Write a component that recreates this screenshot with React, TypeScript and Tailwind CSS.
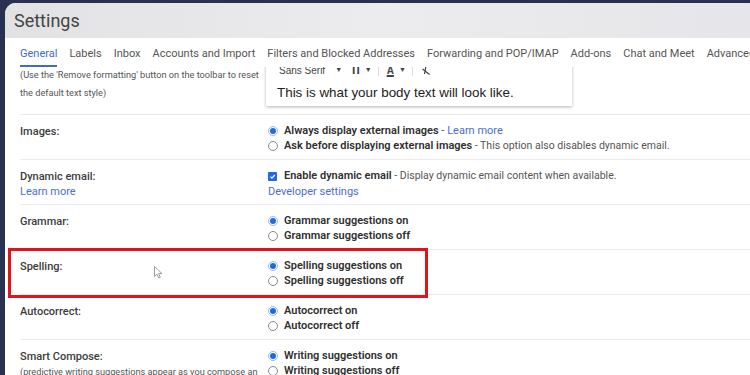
import React from "react";

const Radio = ({ checked }: { checked?: boolean }) =>
  checked ? (
    <span className="w-[10px] h-[10px] rounded-full border border-[#9db8ee] bg-white flex items-center justify-center shrink-0">
      <span className="w-[6px] h-[6px] rounded-full bg-[#1f6ae0]" />
    </span>
  ) : (
    <span className="w-[10px] h-[10px] rounded-full border border-[#8a8a8a] bg-white shrink-0" />
  );

const Check = () => (
  <span className="w-[9px] h-[9px] rounded-[1px] bg-[#1f6ae0] flex items-center justify-center shrink-0">
    <svg width="7" height="7" viewBox="0 0 10 10">
      <path d="M2 5.2 L4.2 7.3 L8.2 2.8" stroke="white" strokeWidth="1.8" fill="none" />
    </svg>
  </span>
);

const Opt = ({ checked, text, extra }: { checked?: boolean; text: string; extra?: React.ReactNode }) => (
  <div className="flex items-center h-[15px] whitespace-nowrap">
    <Radio checked={checked} />
    <span className="ml-[6px] font-semibold text-[#2f2f2f] text-[11px]">{text}</span>
    {extra}
  </div>
);

const Row = ({ label, sub, children }: { label: React.ReactNode; sub?: React.ReactNode; children: React.ReactNode }) => (
  <div className="flex border-t border-[#ebebeb] h-[45.1px] pt-[8.5px]">
    <div className="w-[248px] shrink-0">
      <div className="h-[15px] leading-[15px] text-[11px] font-medium text-[#3c3c3c]">{label}</div>
      {sub}
    </div>
    <div className="flex flex-col">{children}</div>
  </div>
);

export default function App() {
  return (
    <div
      className="w-[750px] h-[375px] overflow-hidden bg-[#283150] relative"
      style={{ fontFamily: "Roboto, 'Open Sans', Arial, sans-serif" }}
    >
      <div className="ml-[5px] mt-[3px] rounded-tl-[11px] bg-white h-[372px] overflow-hidden flex flex-col">
        <div className="h-[35px] shrink-0 bg-gradient-to-r from-[#e2e2e4] via-[#ececee] to-[#e6e6ea] flex items-center pl-[9px] pt-[1px]">
          <span className="text-[18px] text-[#444] leading-none">Settings</span>
        </div>
        <div className="h-[29px] shrink-0 flex items-stretch gap-[12px] pl-[15px] text-[11px] text-[#555] whitespace-nowrap relative z-10 bg-white">
          {["General", "Labels", "Inbox", "Accounts and Import", "Filters and Blocked Addresses", "Forwarding and POP/IMAP", "Add-ons", "Chat and Meet", "Advanced"].map((t, i) => (
            <span key={t} className={`relative flex items-center pt-[3px] ${i === 0 ? "text-[#3d6bd3]" : ""}`}>
              {t}
              {i === 0 && <span className="absolute left-0 right-0 bottom-0 h-[2px] bg-[#3d6bd3]" />}
            </span>
          ))}
        </div>
        <div className="flex-1 overflow-hidden pl-[15px]">
          <div className="flex h-[47px]">
            <div className="w-[248px] shrink-0 text-[9.2px] leading-[18px] text-[#555]">
              <div className="whitespace-nowrap -mt-[1px]">(Use the 'Remove formatting' button on the toolbar to reset</div>
              <div>the default text style)</div>
            </div>
            <div
              className="w-[306px] h-[45px] -mt-[6px] -ml-[2px] bg-white shadow-[0_1px_3px_rgba(0,0,0,0.3)] pl-[11px] flex flex-col"
              style={{ fontFamily: "'Liberation Sans', Arial, sans-serif" }}
            >
              <div className="h-[18px] flex items-center text-[10px] text-[#444] whitespace-nowrap">
                <span className="ml-[2px]">Sans Serif</span>
                <span className="ml-[10px] text-[7px]">▼</span>
                <span className="ml-[8px] font-bold text-[12px] tracking-[-1px]">TI</span>
                <span className="ml-[6px] text-[7px]">▼</span>
                <span className="ml-[6px] w-px h-[11px] bg-[#ddd]" />
                <span className="ml-[8px] font-bold text-[10px] underline decoration-2">A</span>
                <span className="ml-[5px] text-[7px]">▼</span>
                <span className="ml-[6px] w-px h-[11px] bg-[#ddd]" />
                <svg className="ml-[8px]" width="10" height="10" viewBox="0 0 10 10">
                  <path d="M2 1 H8 M5 1 L3.5 9 M1.5 4 L8.5 9.5" stroke="#444" strokeWidth="1.2" fill="none" />
                </svg>
              </div>
              <div className="mt-[4px] text-[13.4px] leading-[20px] text-[#222] whitespace-nowrap">
                This is what your body text will look like.
              </div>
            </div>
          </div>

          <Row label="Images:">
            <Opt
              checked
              text="Always display external images"
              extra={<span className="text-[11px] text-[#555]">&nbsp;- <span className="text-[#4a6fd0]">Learn more</span></span>}
            />
            <Opt
              text="Ask before displaying external images"
              extra={<span className="text-[10.5px] text-[#555]">&nbsp;- This option also disables dynamic email.</span>}
            />
          </Row>

          <Row
            label="Dynamic email:"
            sub={<div className="h-[16px] leading-[16px] text-[11px] text-[#4a6fd0]">Learn more</div>}
          >
            <div className="flex items-center h-[15px] whitespace-nowrap">
              <Check />
              <span className="ml-[7px] font-semibold text-[#2f2f2f] text-[11px]">Enable dynamic email</span>
              <span className="text-[10.5px] text-[#555]">&nbsp;- Display dynamic email content when available.</span>
            </div>
            <div className="h-[16px] leading-[16px] text-[11px] text-[#4a6fd0]">Developer settings</div>
          </Row>

          <Row label="Grammar:">
            <Opt checked text="Grammar suggestions on" />
            <Opt text="Grammar suggestions off" />
          </Row>

          <Row label="Spelling:">
            <Opt checked text="Spelling suggestions on" />
            <Opt text="Spelling suggestions off" />
          </Row>

          <Row label="Autocorrect:">
            <Opt checked text="Autocorrect on" />
            <Opt text="Autocorrect off" />
          </Row>

          <Row
            label="Smart Compose:"
            sub={
              <div className="h-[15px] leading-[15px] text-[9.2px] text-[#555] whitespace-nowrap">
                (predictive writing suggestions appear as you compose an
              </div>
            }
          >
            <Opt checked text="Writing suggestions on" />
            <Opt text="Writing suggestions off" />
          </Row>
        </div>
      </div>

      <div className="absolute left-[8px] top-[248px] w-[420px] h-[50px] border-[3px] border-[#e3131c]" />

      <svg className="absolute left-[154px] top-[266px]" width="9" height="13" viewBox="0 0 9 13">
        <path d="M0.5 0.5 L0.5 10.5 L3 8.2 L4.8 12 L6.3 11.3 L4.6 7.6 L8 7.6 Z" fill="white" stroke="#888" strokeWidth="0.8" />
      </svg>
    </div>
  );
}
